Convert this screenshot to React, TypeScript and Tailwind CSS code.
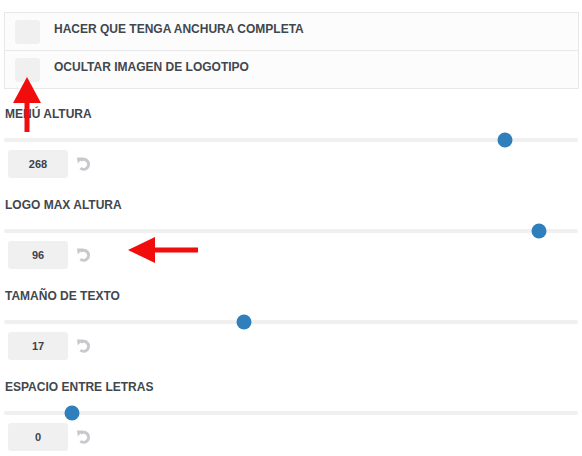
import React from "react";

const font = { fontFamily: '"Liberation Sans", Arial, sans-serif' };

function ResetIcon() {
  return (
    <svg width="16" height="16" viewBox="0 0 16 16" fill="none">
      <path d="M4.4 4.4 A5 5 0 1 1 4.4 12.2" stroke="#c8c9cc" strokeWidth="3" strokeLinecap="butt" fill="none" />
      <path d="M1 1.6 L7.2 1.6 L1.8 7.6 Z" fill="#c8c9cc" />
    </svg>
  );
}

const sliders = [
  { label: "MENÚ ALTURA", value: "268", x: 505 },
  { label: "LOGO MAX ALTURA", value: "96", x: 539 },
  { label: "TAMAÑO DE TEXTO", value: "17", x: 244 },
  { label: "ESPACIO ENTRE LETRAS", value: "0", x: 72 },
];

function Slider({ label, value, x }: { label: string; value: string; x: number }) {
  return (
    <div className="flex flex-col">
      <div className="h-[16px] leading-[16px] text-[12px] font-semibold text-[#41474e] pl-[1px]">{label}</div>
      <div className="relative mt-[16px] h-[4px] w-[574px] bg-[#f0f0f0] rounded-full">
        <div
          className="absolute top-1/2 w-[15px] h-[15px] -translate-x-1/2 -translate-y-1/2 rounded-full bg-[#2f7fbc]"
          style={{ left: x - 4 }}
        />
      </div>
      <div className="mt-[8px] flex items-center gap-[8px] pl-[4px]">
        <div className="w-[60px] h-[28px] bg-[#f0f0f0] rounded-[3px] flex items-center justify-center text-[11px] font-bold text-[#3c434a]">
          {value}
        </div>
        <ResetIcon />
      </div>
    </div>
  );
}

export default function App() {
  return (
    <div className="relative w-[582px] h-[456px] bg-white overflow-hidden" style={font}>
      <div className="pt-[12px] pl-[4px] flex flex-col">
        <div className="w-[575px] border border-[#e8e8e8] bg-[#fcfcfc]">
          <div className="h-[37px] flex items-center pl-[10px] gap-[14px]">
            <div className="w-[25px] h-[24px] bg-[#f0f0f0] rounded-[3px]" />
            <span className="mb-[5px] text-[12px] font-semibold text-[#41474e]">HACER QUE TENGA ANCHURA COMPLETA</span>
          </div>
          <div className="h-[38px] border-t border-[#e8e8e8] flex items-center pl-[10px] gap-[14px]">
            <div className="w-[25px] h-[24px] bg-[#f0f0f0] rounded-[3px]" />
            <span className="mb-[5px] text-[12px] font-semibold text-[#41474e]">OCULTAR IMAGEN DE LOGOTIPO</span>
          </div>
        </div>
        <div className="mt-[17px] flex flex-col gap-[19px]">
          {sliders.map((s) => (
            <Slider key={s.label} {...s} />
          ))}
        </div>
      </div>
      <svg className="absolute left-0 top-0 pointer-events-none" width="582" height="456">
        <polygon points="27,77 41,103 13,103" fill="#f20d0d" />
        <rect x="24.5" y="102" width="5" height="30" fill="#f20d0d" />
        <polygon points="128,250 155,237 155,263" fill="#f20d0d" />
        <rect x="154" y="247.5" width="44" height="5" fill="#f20d0d" />
      </svg>
    </div>
  );
}
